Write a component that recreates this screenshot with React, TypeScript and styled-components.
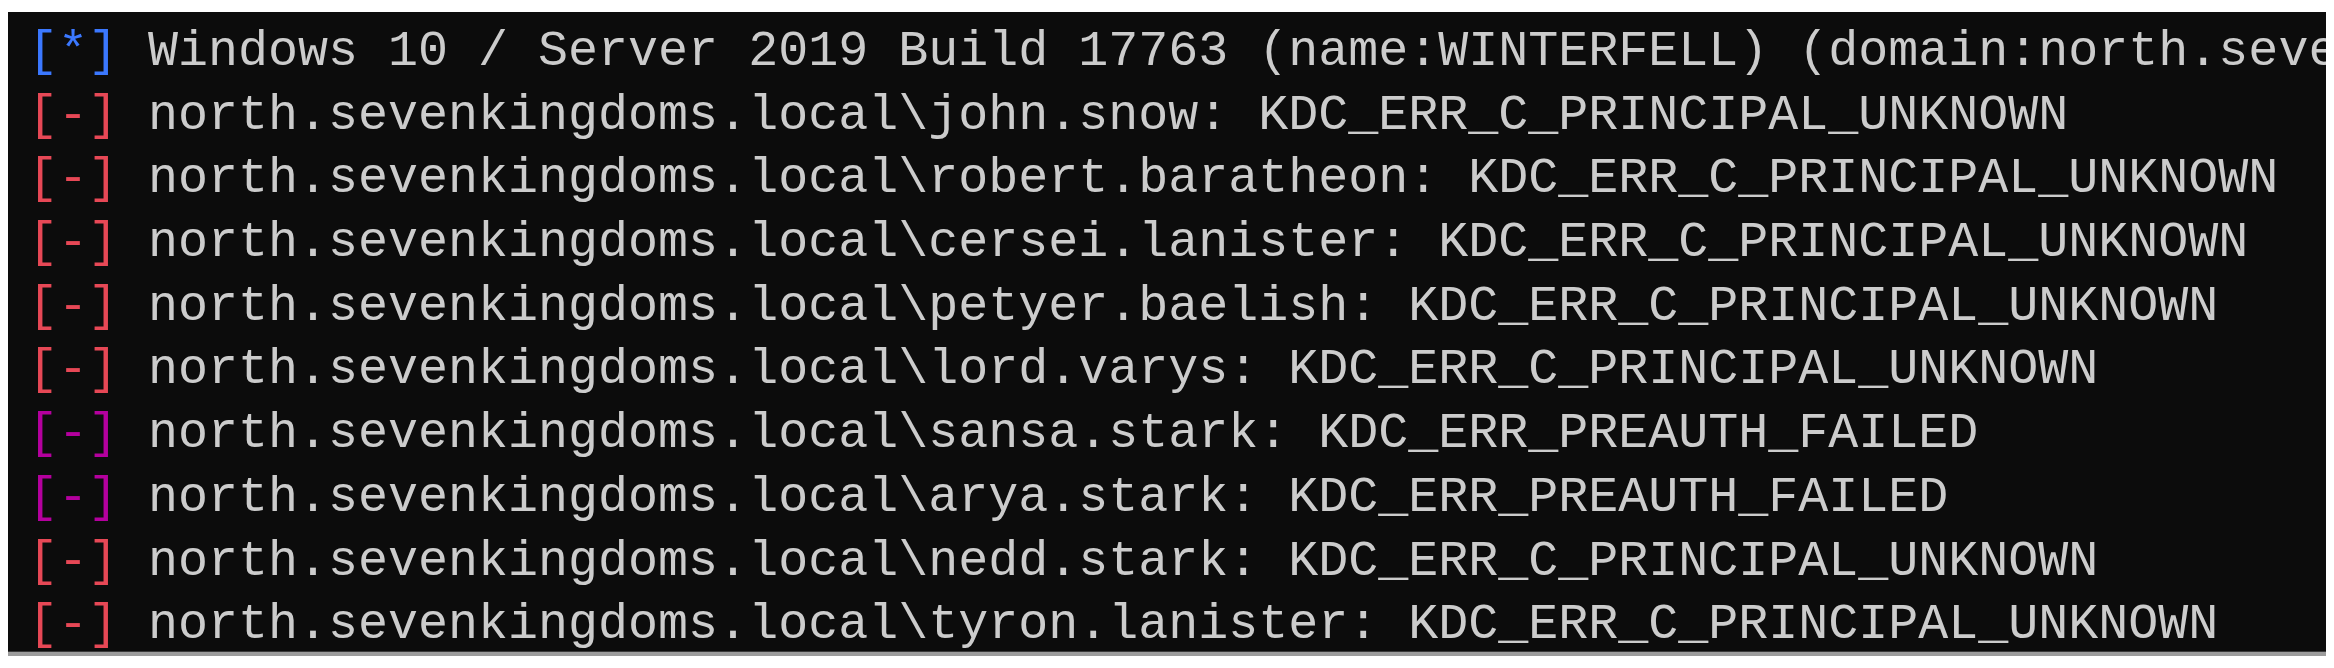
import React from "react";
import styled, { createGlobalStyle } from "styled-components";

const GlobalStyle = createGlobalStyle`
  html, body {
    margin: 0;
    padding: 0;
    background: #ffffff;
  }
  body {
    padding: 12px 8px 0 8px;
    font-family: "Liberation Mono", "DejaVu Sans Mono", monospace;
  }
`;

const Terminal = styled.div`
  background: #0c0c0c;
  height: 644px;
  box-sizing: border-box;
  padding: 8px 0 0 20px;
  overflow: hidden;
  border-bottom: 4px solid #9c9c9c;
  box-shadow: inset 0 -1px 0 #3a3a3a;
`;

const Line = styled.div`
  font-family: "Liberation Mono", "DejaVu Sans Mono", monospace;
  font-size: 50px;
  line-height: 63.7px;
  height: 63.7px;
  color: #cccccc;
  white-space: pre;
`;

const Tag = styled.span<{ $tone: string }>`
  color: ${(p) => p.$tone};
`;

const TONES: Record<string, string> = {
  info: "#3b78ff",
  err: "#e74856",
  fail: "#b4009e",
};

const MARKS: Record<string, string> = {
  info: "[*]",
  err: "[-]",
  fail: "[-]",
};

type Row = { kind: "info" | "err" | "fail"; text: string };

const rows: Row[] = [
  {
    kind: "info",
    text: "Windows 10 / Server 2019 Build 17763 (name:WINTERFELL) (domain:north.sevenkingdoms.local)",
  },
  { kind: "err", text: "north.sevenkingdoms.local\\john.snow: KDC_ERR_C_PRINCIPAL_UNKNOWN" },
  { kind: "err", text: "north.sevenkingdoms.local\\robert.baratheon: KDC_ERR_C_PRINCIPAL_UNKNOWN" },
  { kind: "err", text: "north.sevenkingdoms.local\\cersei.lanister: KDC_ERR_C_PRINCIPAL_UNKNOWN" },
  { kind: "err", text: "north.sevenkingdoms.local\\petyer.baelish: KDC_ERR_C_PRINCIPAL_UNKNOWN" },
  { kind: "err", text: "north.sevenkingdoms.local\\lord.varys: KDC_ERR_C_PRINCIPAL_UNKNOWN" },
  { kind: "fail", text: "north.sevenkingdoms.local\\sansa.stark: KDC_ERR_PREAUTH_FAILED" },
  { kind: "fail", text: "north.sevenkingdoms.local\\arya.stark: KDC_ERR_PREAUTH_FAILED" },
  { kind: "err", text: "north.sevenkingdoms.local\\nedd.stark: KDC_ERR_C_PRINCIPAL_UNKNOWN" },
  { kind: "err", text: "north.sevenkingdoms.local\\tyron.lanister: KDC_ERR_C_PRINCIPAL_UNKNOWN" },
];

export default function App() {
  return (
    <>
      <GlobalStyle />
      <Terminal>
        {rows.map((r, i) => (
          <Line key={i}>
            <Tag $tone={TONES[r.kind]}>{MARKS[r.kind]}</Tag> {r.text}
          </Line>
        ))}
      </Terminal>
    </>
  );
}
